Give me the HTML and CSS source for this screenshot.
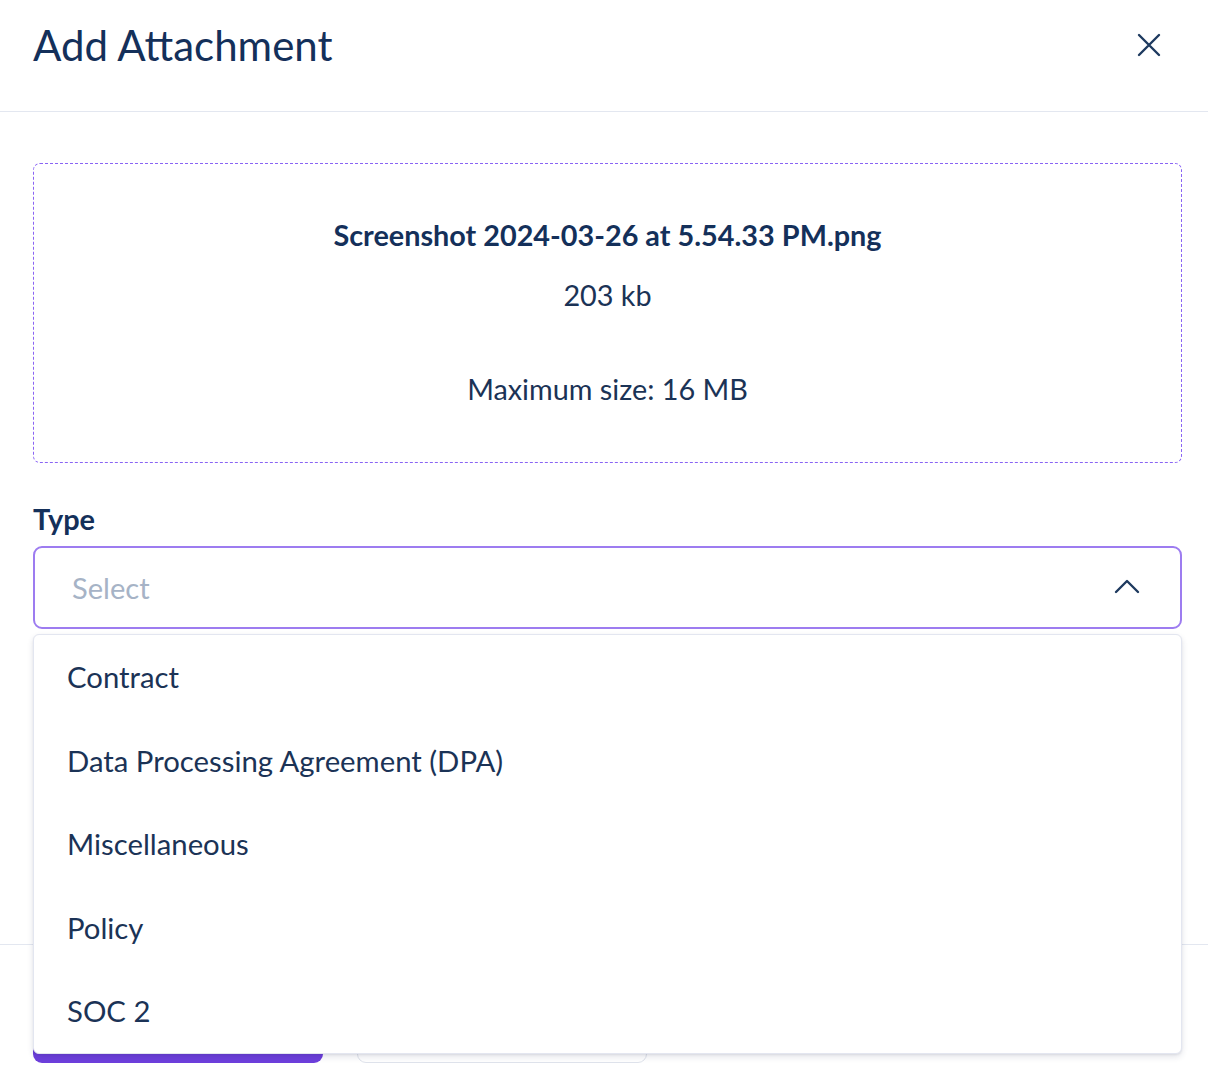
FILE: index.html
```html
<!DOCTYPE html>
<html>
<head>
<meta charset="utf-8">
<link rel="stylesheet" href="styles.css">
</head>
<body>
<div class="modal">
  <header class="modal-header">
    <h1 class="title">Add Attachment</h1>
    <button class="close" aria-label="Close">
      <svg width="24" height="24" viewBox="0 0 24 24"><path d="M2 2 L22 22 M22 2 L2 22" stroke="#1e3a5f" stroke-width="2.4" stroke-linecap="round" fill="none"/></svg>
    </button>
  </header>
  <div class="modal-body">
    <div class="dropzone">
      <div class="filename">Screenshot 2024-03-26 at 5.54.33&#8239;PM.png</div>
      <div class="filesize">203 kb</div>
      <div class="maxsize">Maximum size: 16 MB</div>
    </div>
    <div class="field">
      <label class="label">Type</label>
      <div class="select-wrap">
        <div class="select">
          <span class="placeholder">Select</span>
          <svg class="chev" width="26" height="16" viewBox="0 0 26 16"><path d="M2 14 L13 3 L24 14" stroke="#1e3a5f" stroke-width="2.4" stroke-linecap="round" stroke-linejoin="round" fill="none"/></svg>
        </div>
        <ul class="menu">
          <li class="option">Contract</li>
          <li class="option">Data Processing Agreement (DPA)</li>
          <li class="option">Miscellaneous</li>
          <li class="option">Policy</li>
          <li class="option">SOC 2</li>
        </ul>
      </div>
    </div>
  </div>
  <footer class="modal-footer">
    <button class="btn btn-primary" aria-label="Upload"></button>
    <button class="btn btn-secondary" aria-label="Cancel"></button>
  </footer>
</div>
</body>
</html>
```

FILE: styles.css
```css
* { box-sizing: border-box; }
html, body { margin: 0; padding: 0; background: #fff; }
body {
  font-family: Lato, "Open Sans", sans-serif;
  color: #1b3356;
  width: 1208px;
  height: 1084px;
  overflow: hidden;
}
.modal { width: 1208px; }
.modal-header {
  height: 112px;
  border-bottom: 1px solid #e3e7f0;
  display: flex;
  align-items: flex-start;
  justify-content: space-between;
  padding: 0 47px 0 33px;
}
.title {
  margin: 19px 0 0 0;
  font-size: 42px;
  font-weight: 400;
  line-height: 52px;
  color: #14305a;
}
.close {
  margin-top: 33px;
  background: none;
  border: 0;
  padding: 0;
  width: 24px;
  height: 24px;
  cursor: pointer;
}
.modal-body {
  padding: 51px 26px 0 33px;
  height: 832px;
}
.dropzone {
  height: 300px;
  border: 1px dashed #8a64f4;
  border-radius: 7px;
  display: flex;
  flex-direction: column;
  align-items: center;
  text-align: center;
}
.filename {
  margin-top: 51px;
  font-weight: 700;
  font-size: 28.8px;
  line-height: 40px;
  color: #14305a;
}
.filesize {
  margin-top: 20px;
  font-size: 28.8px;
  line-height: 40px;
}
.maxsize {
  margin-top: 54px;
  font-size: 28.8px;
  line-height: 40px;
}
.field { margin-top: 36px; }
.label {
  display: block;
  font-weight: 700;
  font-size: 28.9px;
  line-height: 40px;
  color: #14305a;
  margin-bottom: 7px;
}
.select-wrap { position: relative; }
.select {
  height: 83px;
  border: 2px solid #9d7cf0;
  border-radius: 9px;
  display: flex;
  align-items: center;
  justify-content: space-between;
  padding: 0 40px 0 37px;
}
.placeholder {
  font-size: 29.1px;
  color: #a6b3c6;
}
.chev { margin-top: -3px; }
.menu {
  position: absolute;
  left: 0;
  right: 0;
  top: 88px;
  margin: 0;
  list-style: none;
  background: #fff;
  border: 1px solid #e3e6f0;
  border-radius: 6px;
  box-shadow: 0 3px 6px rgba(30, 40, 80, 0.12), 0 1px 2px rgba(30, 40, 80, 0.08);
  z-index: 5;
  padding: 0;
  height: 420px;
}
.option {
  height: 83.5px;
  display: flex;
  align-items: center;
  padding-left: 33px;
  font-size: 29.3px;
  color: #1b3356;
}
.modal-footer {
  border-top: 1px solid #e3e7f0;
  padding: 37px 33px 0 33px;
  display: flex;
  gap: 34px;
}
.btn {
  height: 81px;
  width: 290px;
  border-radius: 9px;
  font-family: Lato, sans-serif;
  font-size: 28px;
  font-weight: 700;
}
.btn-primary {
  background: #6d3fdc;
  color: #fff;
  border: 0;
}
.btn-secondary {
  background: #fff;
  border: 1px solid #dfe3ec;
  color: #1b3356;
}
```
